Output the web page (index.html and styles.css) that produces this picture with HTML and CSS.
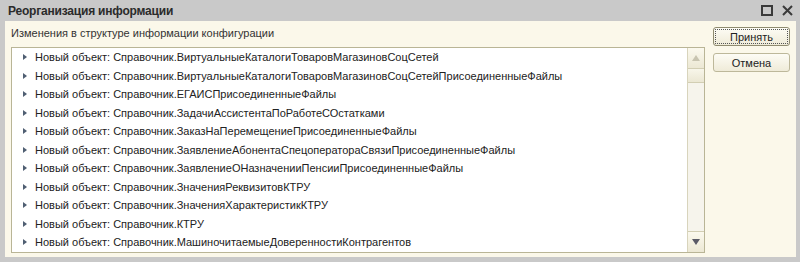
FILE: index.html
```html
<!DOCTYPE html>
<html lang="ru">
<head>
    <meta charset="UTF-8">
    <title>Реорганизация информации</title>
    <link rel="stylesheet" href="styles.css">
</head>
<body>
    <div class="window">
        <div class="titlebar">
            <span class="title">Реорганизация информации</span>
            <div class="title-buttons">
                <span class="btn-max"></span>
                <svg class="btn-close" width="11" height="11" viewBox="0 0 11 11">
                    <path d="M1 1 L10 10 M10 1 L1 10" stroke="#3a3a3a" stroke-width="2"/>
                </svg>
            </div>
        </div>
        <div class="content">
            <div class="main">
                <div class="label">Изменения в структуре информации конфигурации</div>
                <div class="listbox">
                    <ul class="items">
                        <li>Новый объект: Справочник.ВиртуальныеКаталогиТоваровМагазиновСоцСетей</li>
                        <li>Новый объект: Справочник.ВиртуальныеКаталогиТоваровМагазиновСоцСетейПрисоединенныеФайлы</li>
                        <li>Новый объект: Справочник.ЕГАИСПрисоединенныеФайлы</li>
                        <li>Новый объект: Справочник.ЗадачиАссистентаПоРаботеСОстатками</li>
                        <li>Новый объект: Справочник.ЗаказНаПеремещениеПрисоединенныеФайлы</li>
                        <li>Новый объект: Справочник.ЗаявлениеАбонентаСпецоператораСвязиПрисоединенныеФайлы</li>
                        <li>Новый объект: Справочник.ЗаявлениеОНазначенииПенсииПрисоединенныеФайлы</li>
                        <li>Новый объект: Справочник.ЗначенияРеквизитовКТРУ</li>
                        <li>Новый объект: Справочник.ЗначенияХарактеристикКТРУ</li>
                        <li>Новый объект: Справочник.КТРУ</li>
                        <li>Новый объект: Справочник.МашиночитаемыеДоверенностиКонтрагентов</li>
                    </ul>
                    <div class="scrollbar">
                        <div class="sb-btn sb-up"><span class="arrow-up"></span></div>
                        <div class="sb-thumb"></div>
                        <div class="sb-track"></div>
                        <div class="sb-btn sb-down"><span class="arrow-down"></span></div>
                    </div>
                </div>
            </div>
            <div class="side">
                <button class="button default">Принять</button>
                <button class="button">Отмена</button>
            </div>
        </div>
    </div>
</body>
</html>
```

FILE: styles.css
```css
body {
    margin: 0;
    background-color: #c9c9c9;
    font-family: "Liberation Sans", Arial, sans-serif;
    font-size: 11px;
    color: #222;
}
.window {
    width: 800px;
    height: 262px;
    display: flex;
    flex-direction: column;
}
.titlebar {
    height: 21px;
    display: flex;
    align-items: center;
    justify-content: space-between;
    padding: 0 7px 0 8px;
}
.title {
    font-weight: bold;
    font-size: 12px;
    letter-spacing: -0.2px;
    color: #2b2b2b;
}
.title-buttons {
    display: flex;
    align-items: center;
    gap: 9px;
}
.btn-max {
    width: 8px;
    height: 7px;
    border: 2px solid #3a3a3a;
}
.content {
    margin: 0 4px 0 5px;
    height: 236px;
    background-color: #fbf8ea;
    display: flex;
    box-sizing: border-box;
    padding: 6px 0 0 6px;
}
.main {
    display: flex;
    flex-direction: column;
}
.label {
    height: 20px;
    line-height: 13px;
    color: #333;
}
.listbox {
    width: 694px;
    height: 206px;
    box-sizing: border-box;
    border: 1px solid #b9b596;
    background-color: #fff;
    display: flex;
    justify-content: space-between;
}
.items {
    list-style: none;
    margin: 0;
    padding: 0;
}
.items li {
    height: 18.5px;
    line-height: 18.5px;
    padding-left: 23px;
    position: relative;
    white-space: nowrap;
    color: #222;
}
.items li::before {
    content: "";
    position: absolute;
    left: 11px;
    top: 6px;
    border-left: 4px solid #4f5e72;
    border-top: 3px solid transparent;
    border-bottom: 3px solid transparent;
}
.scrollbar {
    width: 16px;
    border-left: 1px solid #d8d4bc;
    background-color: #f6f4ec;
    display: flex;
    flex-direction: column;
}
.sb-btn {
    height: 20px;
    background: linear-gradient(#fbf9ee, #ece8d4);
    border-bottom: 1px solid #d2ceb3;
    display: flex;
    align-items: center;
    justify-content: center;
}
.sb-down {
    border-bottom: none;
    border-top: 1px solid #d2ceb3;
}
.sb-thumb {
    height: 13px;
    background: linear-gradient(#f8f6ea, #ebe7d3);
    border-bottom: 1px solid #d2ceb3;
}
.sb-track {
    flex: 1;
}
.arrow-up {
    border-bottom: 6px solid #c8c4b0;
    border-left: 4px solid transparent;
    border-right: 4px solid transparent;
}
.arrow-down {
    border-top: 6px solid #5a5a66;
    border-left: 4px solid transparent;
    border-right: 4px solid transparent;
}
.side {
    display: flex;
    flex-direction: column;
    gap: 7px;
    margin-left: 8px;
}
.button {
    width: 77px;
    height: 19px;
    padding: 0;
    font-family: "Liberation Sans", Arial, sans-serif;
    font-size: 11px;
    color: #222;
    background: linear-gradient(#fdfcf5, #efebd8);
    border: 1px solid #bdb89a;
    border-radius: 3px;
}
.button.default {
    outline: 1px dotted #555;
    outline-offset: -3px;
    border-color: #8f8b70;
}
```
